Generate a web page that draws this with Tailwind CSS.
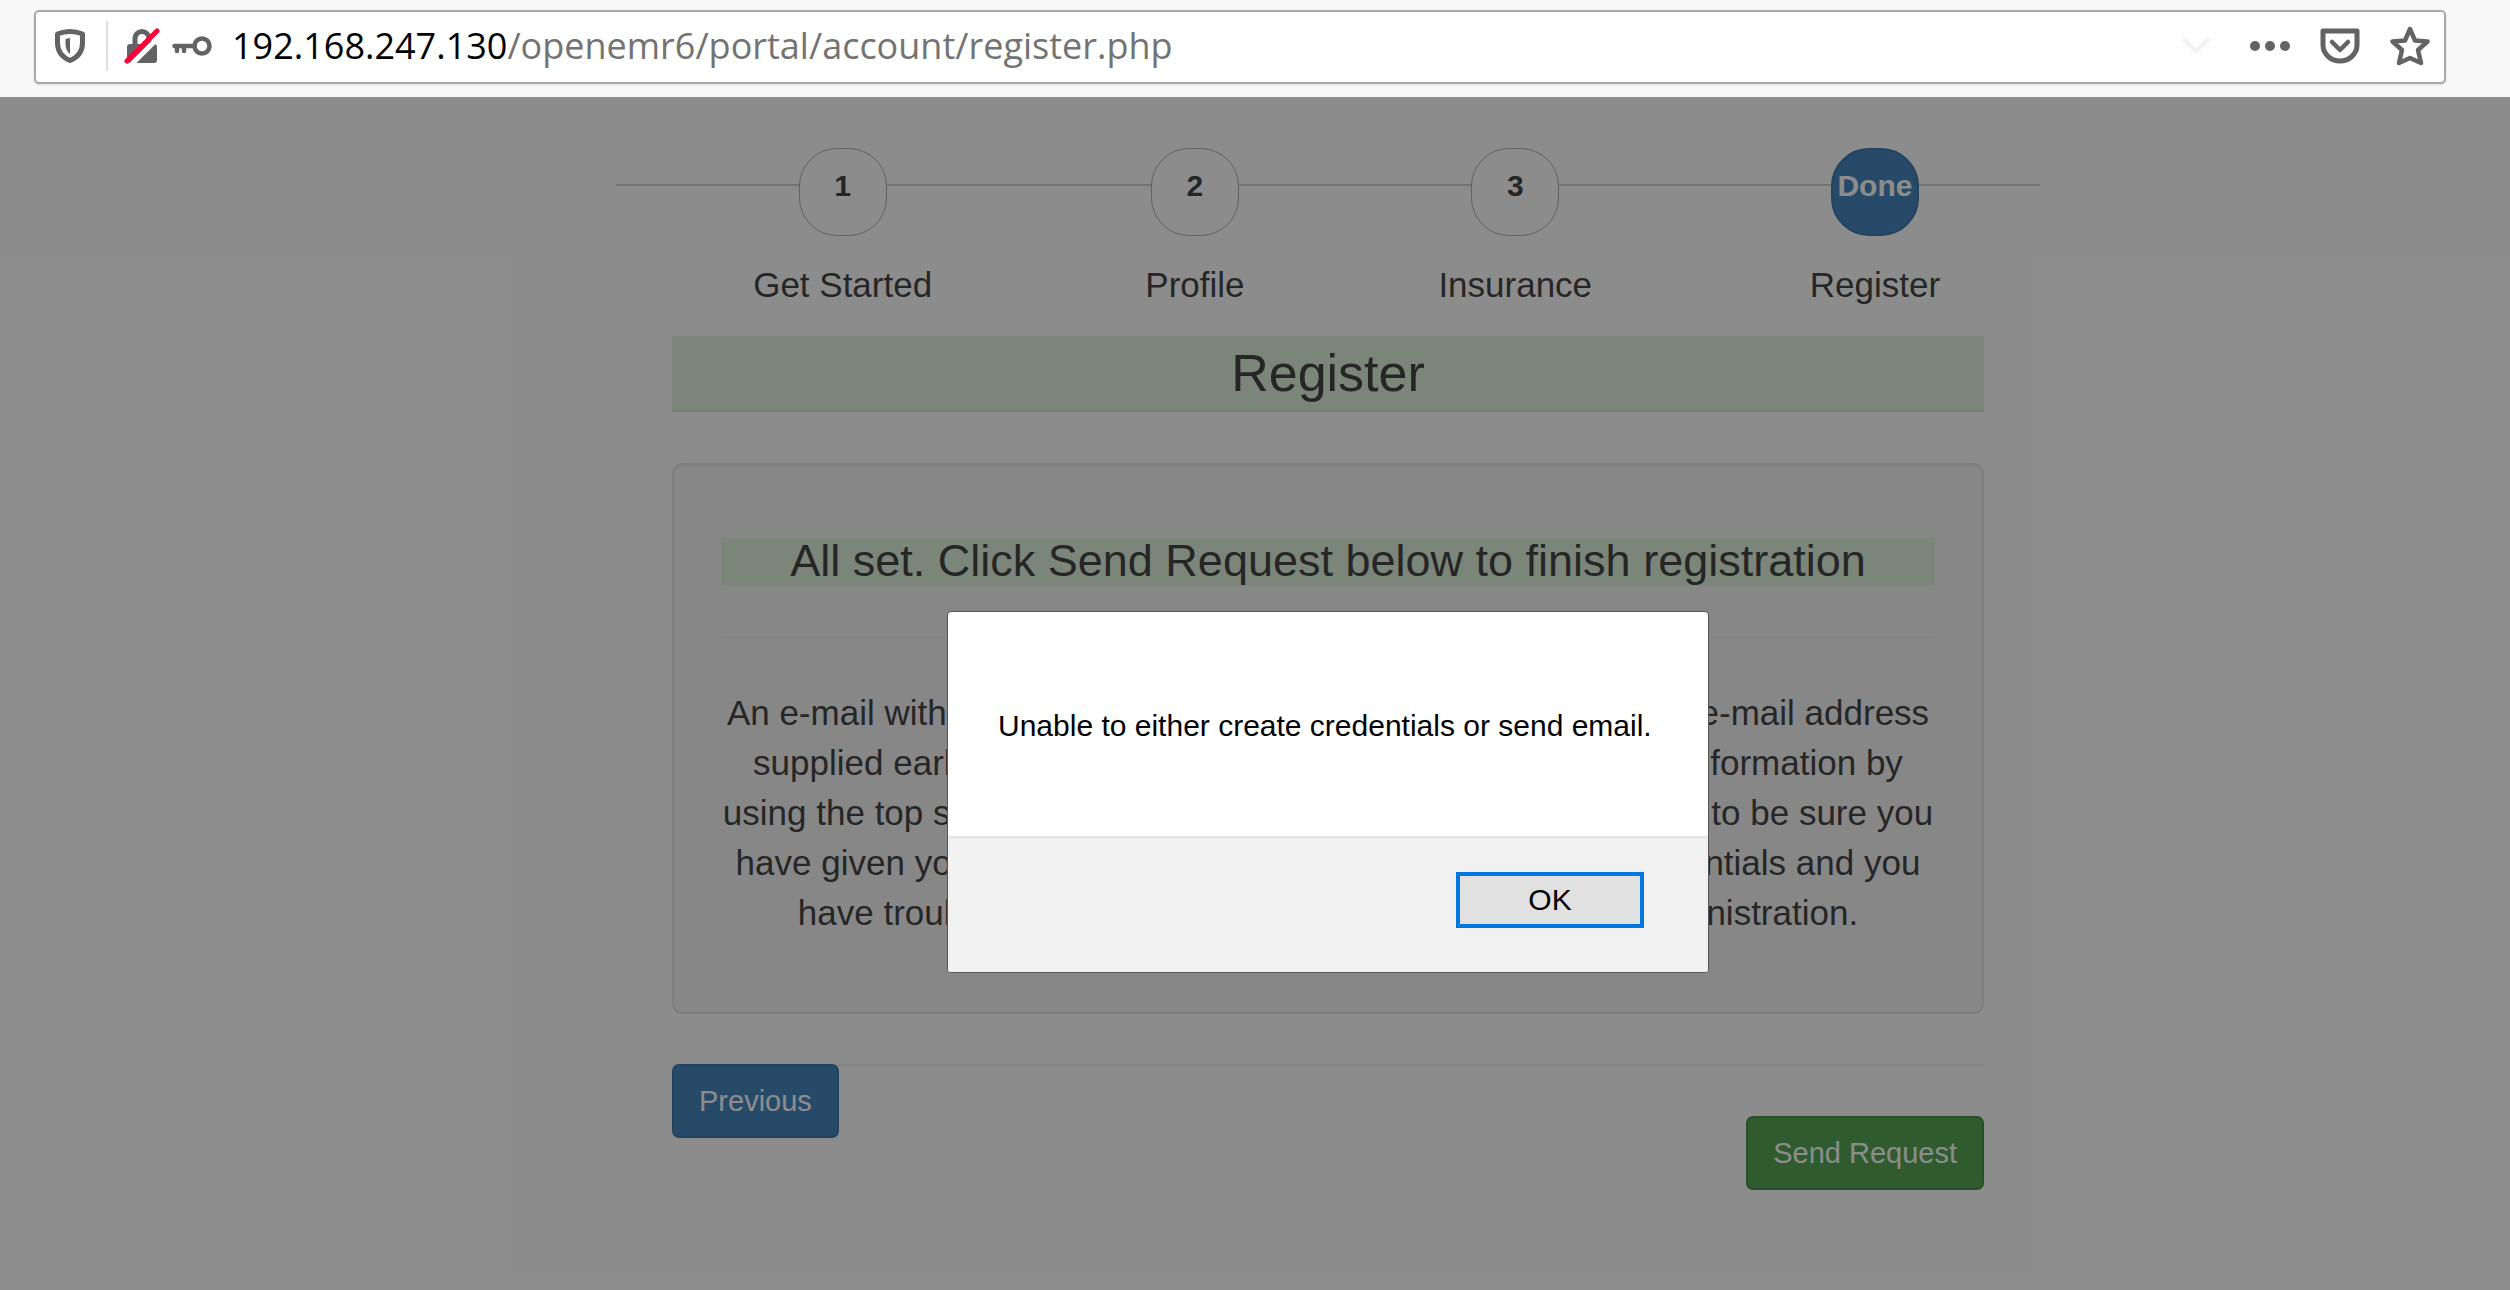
<!DOCTYPE html>
<html lang="en">
<head>
<meta charset="utf-8">
<title>Register</title>
<script src="https://cdn.jsdelivr.net/npm/@tailwindcss/browser@4"></script>
</head>
<body class="min-h-screen flex flex-col bg-white text-[#333] font-['Liberation_Sans',Arial,sans-serif]">

<header class="relative h-[97px] shrink-0 bg-[#f9f9fa] pt-[10px] pl-[34px] pr-[64px]">
  <div class="flex h-[74px] items-center rounded-[5px] border-2 border-[#a8a8a8] bg-white pb-[2px] pl-[17px] pr-[14px] shadow-sm">
    <button aria-label="Tracking protection" class="shrink-0">
      <svg class="size-[34px]" viewBox="0 0 34 34" fill="none"><path d="M17 2.500c4.500 0 8.500.8 12.500 2.500v9c0 7.500-4 14-12.500 17.500C8.500 28 4.500 21.500 4.500 14V5C8.500 3.300 12.500 2.500 17 2.500z" stroke="#636363" stroke-width="5" stroke-linejoin="round"/><path d="M17 9v16c-3-2-4.500-6-4.500-10.500V10z" fill="#636363"/></svg>
    </button>
    <span class="ml-[19px] h-[50px] w-[2px] bg-[#dedee0]"></span>
    <button aria-label="Connection not secure" class="ml-[16px] shrink-0">
      <svg class="size-[36px]" viewBox="0 0 36 36" fill="none"><path d="M11 17v-6.500a7 7 0 0 1 14 0V17" stroke="#636363" stroke-width="5"/><rect x="3" y="16" width="30" height="19" rx="3" fill="#636363"/><path d="M6 38L38 6" stroke="#fff" stroke-width="5"/><path d="M3 33L33 3" stroke="#ff0039" stroke-width="5" stroke-linecap="round"/></svg>
    </button>
    <button aria-label="Saved login" class="ml-[12px] shrink-0">
      <svg class="h-[26px] w-[40px]" viewBox="0 0 40 26" fill="none" stroke="#636363" stroke-linecap="round"><circle cx="30" cy="13" r="7.500" stroke-width="4.500"/><path d="M22 13H2.500" stroke-width="4.500"/><path d="M5 14v4M12 14v4" stroke-width="4.500"/></svg>
    </button>
    <div class="ml-[20px] flex-1 whitespace-nowrap text-[36px] leading-[48px] text-[#737373] font-['Open_Sans','Noto_Sans',sans-serif]"><span class="text-black">192.168.247.130</span>/openemr6/portal/account/register.php</div>
    <button aria-label="History" class="mr-[38px]"><svg class="h-[18px] w-[30px]" viewBox="0 0 30 18" fill="none"><path d="M3 3l12 11L27 3" stroke="#f2f2f2" stroke-width="4" stroke-linecap="round"/></svg></button>
    <button aria-label="Page actions" class="mr-[29px]"><svg class="h-[12px] w-[42px]" viewBox="0 0 42 12" fill="#636363"><circle cx="6" cy="6" r="5"/><circle cx="21" cy="6" r="5"/><circle cx="36" cy="6" r="5"/></svg></button>
    <button aria-label="Save to Pocket" class="mr-[30px]"><svg class="h-[36px] w-[40px]" viewBox="0 0 40 36" fill="none" stroke="#636363" stroke-linecap="round" stroke-linejoin="round"><path d="M3 3h34v14a17 16 0 0 1-34 0z" stroke-width="5"/><path d="M12 14l8 8 8-8" stroke-width="4.500"/></svg></button>
    <button aria-label="Bookmark this page"><svg class="size-[40px]" viewBox="0 0 40 40" fill="none"><path d="M20 3l5 11.500 12.500 1-9.500 8.500 3 13L20 32 9 37l3-13-9.500-8.500 12.500-1z" stroke="#636363" stroke-width="4.500" stroke-linejoin="round"/></svg></button>
  </div>
</header>

<main class="relative flex-1 pt-[51px] pl-[146px]">
  <div class="mx-auto w-[1424px] max-w-full">
    <nav aria-label="Registration steps" class="relative">
      <div class="absolute inset-x-0 top-[36px] h-[2px] bg-[#ccc]"></div>
      <ol class="relative table w-full text-center">
        <li class="table-cell"><a href="#step-1" class="inline-flex size-[88px] justify-center rounded-[38px] border border-[#aaa] bg-white pt-[15px] text-[30px] leading-[43px] font-bold">1</a><p class="mt-[24px] text-[35px] leading-[50px]">Get Started</p></li>
        <li class="table-cell"><a href="#step-2" class="inline-flex size-[88px] justify-center rounded-[38px] border border-[#aaa] bg-white pt-[15px] text-[30px] leading-[43px] font-bold">2</a><p class="mt-[24px] text-[35px] leading-[50px]">Profile</p></li>
        <li class="table-cell"><a href="#step-3" class="inline-flex size-[88px] justify-center rounded-[38px] border border-[#aaa] bg-white pt-[15px] text-[30px] leading-[43px] font-bold">3</a><p class="mt-[24px] text-[35px] leading-[50px]">Insurance</p></li>
        <li class="table-cell"><a href="#step-4" aria-current="step" class="inline-flex size-[88px] justify-center rounded-[38px] border-2 border-[#2e6da4] bg-[#337ab7] pt-[14px] text-[30px] leading-[43px] font-bold text-white">Done</a><p class="mt-[24px] text-[35px] leading-[50px]">Register</p></li>
      </ol>
    </nav>

    <form class="mx-[56px]">
      <h1 class="mt-[26px] border-b-2 border-[#d6e9c6] bg-[#dff0d8] text-center text-[52px] leading-[74px]">Register</h1>
      <section class="mt-[51px] rounded-[10px] border-2 border-[#e3e3e3] bg-[#f5f5f5] px-[47px] pt-[73px] pb-[74px] text-center inset-shadow-xs">
        <h2 class="bg-[#dff0d8] pb-[2px] text-[45px] leading-[46px]">All set. Click Send Request below to finish registration</h2>
        <hr class="my-[50px] border-t-2 border-[#eee]">
        <p class="text-[35px] leading-[50px]">An e-mail with your new account credentials will be sent to the e-mail address supplied earlier. You may still review or edit any part of your information by using the top step buttons to go to the appropriate panels. Note to be sure you have given your correct e-mail address. If after receiving credentials and you have trouble with access to the portal, please contact administration.</p>
      </section>
      <hr class="mt-[50px] border-t-2 border-[#eee]">
      <div class="-mt-[2px] flex items-start justify-between pb-[60px]">
        <button type="button" class="rounded-[7px] border-2 border-[#2e6da4] bg-[#337ab7] px-[25px] text-[29px] leading-[70px] text-white">Previous</button>
        <button type="button" class="mt-[52px] rounded-[7px] border-2 border-[#398439] bg-[#449d44] px-[25px] text-[29px] leading-[70px] text-white">Send Request</button>
      </div>
    </form>
  </div>

  <div class="absolute inset-0 flex items-start justify-center bg-[#1a1a1a]/50 pt-[514px] pl-[146px]">
    <div role="alertdialog" aria-modal="true" aria-labelledby="msg" class="w-[762px] overflow-hidden rounded-[4px] border border-[#555] bg-white text-black">
      <p id="msg" class="px-[50px] pt-[94px] pb-[90px] text-[30px] leading-[40px] whitespace-nowrap">Unable to either create credentials or send email.</p>
      <div class="flex justify-end border-t-2 border-[#e4e4e4] bg-[#f1f1f1] pt-[34px] pr-[64px] pb-[44px]">
        <button autofocus class="h-[56px] w-[188px] border-4 border-[#0078e0] bg-[#e1e1e1] pb-[2px] text-[30px] outline-none">OK</button>
      </div>
    </div>
  </div>
</main>
</body>
</html>
